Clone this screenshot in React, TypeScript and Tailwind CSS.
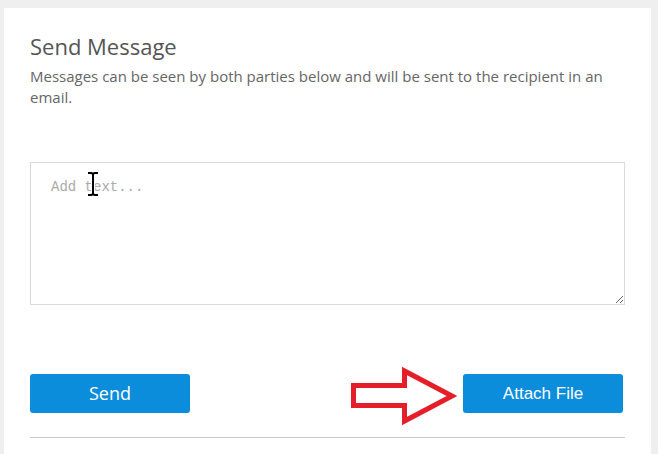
import React from 'react';

function RedArrow() {
  return (
    <svg width="110" height="62" viewBox="0 0 110 62" className="absolute left-[-112px] top-[-8px]">
      <polygon
        points="2.5,19.5 53.5,19.5 53.5,5 101,30 53.5,55 53.5,39.5 2.5,39.5"
        fill="white"
        stroke="#e51f2a"
        strokeWidth="5"
        strokeLinejoin="miter"
      />
    </svg>
  );
}

function IBeam() {
  return (
    <svg width="14" height="26" viewBox="0 0 14 26" className="absolute left-[56px] top-[9px]">
      <path d="M2 2 H5 Q7 2 7 4 Q7 2 9 2 H12 M7 4 V22 M2 24 H5 Q7 24 7 22 Q7 24 9 24 H12" fill="none" stroke="white" strokeWidth="4" />
      <path d="M2 2 H5 Q7 2 7 4 Q7 2 9 2 H12 M7 4 V22 M2 24 H5 Q7 24 7 22 Q7 24 9 24 H12" fill="none" stroke="black" strokeWidth="2" />
    </svg>
  );
}

export default function App() {
  return (
    <div className="w-[658px] h-[454px] bg-[#efefef] pl-[4px] pr-[7px] pt-[8px] overflow-hidden">
      <div className="bg-white h-full px-[26px] pt-[23px]" style={{ fontFamily: '"Open Sans", sans-serif' }}>
        <h2 className="text-[22px] leading-[30px] text-[#555] font-medium">Send Message</h2>
        <p className="mt-[5px] text-[15px] leading-[21px] text-[#666] pr-[6px]">
          Messages can be seen by both parties below and will be sent to the recipient in an email.
        </p>

        {/* Message box */}
        <div className="relative mt-[54px]">
          <textarea
            placeholder="Add text..."
            className="block w-full h-[143px] border border-[#dadada] px-[20px] pt-[14px] text-[14px] leading-[20px] text-[#333] placeholder:text-[#aaa] outline-none"
            style={{ fontFamily: '"Liberation Mono", monospace' }}
          />
          <IBeam />
        </div>

        <div className="flex justify-between items-center mt-[69px] pr-[2px]">
          <button className="w-[160px] h-[39px] rounded-[3px] bg-[#0b8ddb] text-white text-[18px]">
            Send
          </button>
          <div className="relative">
            <RedArrow />
            <button
              className="w-[160px] h-[39px] rounded-[3px] bg-[#0b8ddb] text-white text-[17px]"
              style={{ fontFamily: '"Liberation Sans", Arial, sans-serif' }}
            >
              Attach File
            </button>
          </div>
        </div>

        <div className="mt-[24px] h-px bg-[#c8c8c8]" />
      </div>
    </div>
  );
}
